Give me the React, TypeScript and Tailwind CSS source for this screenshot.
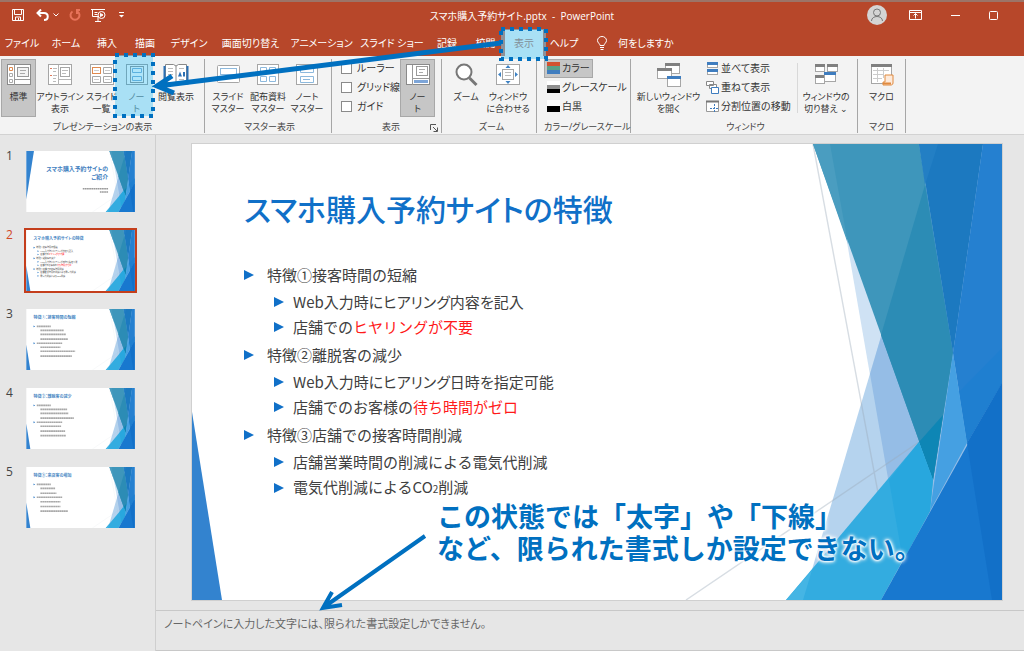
import type { ReactNode } from "react";
import clsx from "clsx";

const BLUE = "#0070c0";

const tabs = [
  { label: "ファイル", width: "w-[44px]" },
  { label: "ホーム", width: "w-[44px]" },
  { label: "挿入", width: "w-[38px]" },
  { label: "描画", width: "w-[38px]" },
  { label: "デザイン", width: "w-[50px]" },
  { label: "画面切り替え", width: "w-[73px]" },
  { label: "アニメーション", width: "w-[69px]" },
  { label: "スライド ショー", width: "w-[72px]" },
  { label: "記録", width: "w-[38px]" },
  { label: "校閲", width: "w-[39px]" },
  { label: "表示", width: "w-[38px]", active: true },
  { label: "ヘルプ", width: "w-[42px]" },
];

const topics = [
  {
    head: "特徴①接客時間の短縮",
    items: [
      { text: "Web入力時にヒアリング内容を記入", tight: true },
      { text: "店舗での", red: "ヒヤリングが不要" },
    ],
  },
  {
    head: "特徴②離脱客の減少",
    items: [
      { text: "Web入力時にヒアリング日時を指定可能", tight: true },
      { text: "店舗でのお客様の", red: "待ち時間がゼロ" },
    ],
  },
  {
    head: "特徴③店舗での接客時間削減",
    items: [{ text: "店舗営業時間の削減による電気代削減" }, { text: "電気代削減によるCO", sub: "2", rest: "削減" }],
  },
];

// [x, y, width] of each body line in the 810 x 456 slide space
const thumbs = [
  { title: "", lines: [] },
  { title: "スマホ購入予約サイトの特徴", lines: [] },
  {
    title: "特徴①：接客時間の短縮",
    lines: [[78, 130, 105], [105, 160, 175], [105, 190, 190], [105, 225, 205], [78, 256, 190], [105, 286, 150], [105, 316, 260], [105, 352, 235]],
  },
  {
    title: "特徴②：離脱客の減少",
    lines: [[78, 130, 105], [105, 160, 200], [105, 190, 210], [105, 225, 250], [78, 256, 190], [105, 286, 155], [105, 322, 185], [105, 356, 190]],
  },
  {
    title: "特徴③：来店客の増加",
    lines: [[78, 130, 105], [105, 160, 110], [105, 196, 120], [78, 226, 190], [105, 260, 150], [105, 295, 150], [105, 330, 205]],
  },
];

function FacetArt({ cover = false }: { cover?: boolean }) {
  return (
    <>
      <rect width="810" height="456" fill="#fff" />
      <path fill="#cfe2f4" d="M638 0H810V456H717Z" />
      <path fill="#b5d3ee" d="M746 0H810V456H611Z" />
      <path fill="#95bde6" d="M746 0 678 230 717 456H810V0Z" />
      <path fill="none" stroke="#9aa9b8" strokeOpacity=".4" strokeWidth="1.4" d="M621 0 706 456M494 456 727 298" />
      <path fill="#3e96bb" d="M621 0H727L761 209 741 336Z" />
      <path fill="#4a9dc0" d="M621 0H638L656 100Z" />
      <path fill="#2c8cb5" d="M733 41 761 209 741 336 689 191Z" />
      <path fill="#0e86b5" d="M751 271 741 336 727 298Z" />
      <path fill="#1c79c0" d="M727 0H791L761 209Z" />
      <path fill="#237fc4" d="M727 0H746L733 41Z" />
      <path fill="#2580d0" d="M791 0H810V239L775 299 761 209Z" />
      <path fill="#1f7fd0" d="M810 204V239L775 299 767 248Z" />
      <path fill="#45a0e2" d="M761 209 775 299 738 367Z" />
      <path fill="#33ace0" d="M727 298 741 336 738 367 689 456H594Z" />
      <path fill="#28a7de" d="M727 298 741 336 738 367 711 417 697 336Z" />
      <path fill="#45b5e4" d="M594 456H611L620 426Z" />
      <path fill="#1878cf" d="M810 239V456H689Z" />
      <path fill="#1270c8" d="M810 239 775 299 800 456H810Z" />
      <path fill="#3383cf" d={cover ? "M0 0H57L0 360Z" : "M0 268 30 456H0Z"} />
    </>
  );
}

function Thumbnail({ index }: { index: number }) {
  const { title, lines } = thumbs[index];
  return (
    <svg viewBox="0 0 810 456" className="block h-full w-full" aria-hidden="true">
      <FacetArt cover={index === 0} />
      {index === 0 && (
        <g fill="#3f80c0" fontSize="44" fontWeight="700" textAnchor="end">
          <text x="611" y="152">スマホ購入予約サイトの</text>
          <text x="611" y="208">ご紹介</text>
          <path d="M422 282H611M550 307H611" stroke="#9a9a9a" strokeWidth="11" strokeDasharray="13 3" />
        </g>
      )}
      {title && (
        <text x="54" y="76" fill="#4a88c4" fontSize="30" fontWeight="700">
          {title}
        </text>
      )}
      {index === 1 &&
        topics.map((topic, i) => (
          <g key={topic.head} fontSize="16" fill="#444">
            <path d={`M54 ${125 + i * 80}v14l12-7z`} fill="#1b6fc2" />
            <text x="75" y={137 + i * 80}>{topic.head}</text>
            {topic.items.map((item, j) => (
              <g key={item.text}>
                <path d={`M84 ${152 + i * 80 + j * 25}v12l10-6z`} fill="#1b6fc2" />
                <text x="105" y={164 + i * 80 + j * 25}>
                  {item.text}
                  <tspan fill="red">{item.red}</tspan>
                  {item.sub}
                  {item.rest}
                </text>
              </g>
            ))}
          </g>
        ))}
      {lines.map(([x, y, w], i) => (
        <g key={i}>
          <path d={`M${x} ${y}h${w}`} stroke="#a8a8a8" strokeWidth="12" strokeDasharray="14 2" />
          {x === 78 && <path d={`M54 ${y - 7}v14l12-7z`} fill="#1b6fc2" />}
        </g>
      ))}
    </svg>
  );
}

/* ---------- ribbon pieces ---------- */

function Group({ label, className, children }: { label: string; className: string; children: ReactNode }) {
  return (
    <section className={clsx("relative flex shrink-0 flex-col justify-between border-r border-[#a6a6a6]", className)}>
      <div className="flex">{children}</div>
      <h2 className="text-center text-[9px] leading-[12px] whitespace-nowrap text-[#444]">{label}</h2>
    </section>
  );
}

function BigButton({ lines, className, pressed, children }: { lines: string[]; className: string; pressed?: boolean; children: ReactNode }) {
  return (
    <button
      type="button"
      className={clsx(
        "flex h-[58px] shrink-0 flex-col items-center border pt-[3px] text-[9px] leading-[12px] whitespace-nowrap text-[#333]",
        pressed ? "border-[#a8a8a8] bg-[#c6c6c6]" : "border-transparent",
        className
      )}
    >
      <svg viewBox="0 0 26 24" className="mb-1 h-[24px] w-[26px] shrink-0" fill="none" aria-hidden="true">
        {children}
      </svg>
      {lines.map((line) => (
        <span key={line}>{line}</span>
      ))}
    </button>
  );
}

function SmallButton({ label, pressed, children }: { label: string; pressed?: boolean; children: ReactNode }) {
  return (
    <button
      type="button"
      className={clsx(
        "flex h-[19px] items-center gap-[2px] border px-[2px] text-[10px] whitespace-nowrap text-[#333]",
        pressed ? "border-[#a8a8a8] bg-[#c6c6c6]" : "border-transparent"
      )}
    >
      <svg viewBox="0 0 13 13" className="h-[13px] w-[13px]" fill="none" aria-hidden="true">
        {children}
      </svg>
      {label}
    </button>
  );
}

function Check({ label }: { label: string }) {
  return (
    <label className="flex h-[19px] items-center gap-[5px] text-[10px] whitespace-nowrap text-[#333]">
      <input type="checkbox" className="h-[11px] w-[11px] appearance-none border border-[#8a8a8a] bg-white" />
      {label}
    </label>
  );
}

function Swatch({ colors }: { colors: string[] }) {
  return (
    <>
      <rect width="13" height="12" fill={colors[0]} />
      <rect y="4" width="13" height="8" fill={colors[1]} />
      <rect y="8" width="13" height="4" fill={colors[2]} />
    </>
  );
}

function MiniWindow({ x, y, w = 12, h = 10, bar = "#808080" }: { x: number; y: number; w?: number; h?: number; bar?: string }) {
  return (
    <>
      <rect x={x + 0.5} y={y + 0.5} width={w} height={h} fill="#fff" stroke="#a6a6a6" />
      <rect x={x} y={y} width={w + 1} height="3" fill={bar} />
    </>
  );
}

function Ribbon() {
  return (
    <div className="flex h-[79px] border-b border-[#d2d2d2] bg-[#f3f3f3] pt-[3px] pb-px">
      <Group label="プレゼンテーションの表示" className="w-[205px] pl-px">
        <BigButton lines={["標準"]} className="w-[35px]" pressed>
          <rect x="1.5" y="1.5" width="23" height="20" fill="#fff" stroke="#8a8a8a" />
          <path d="M8.5 2V22M9 16.5H24" stroke="#999" />
          <path d="M3.500 4.500h3v3h-3z" stroke="#e08a4f" />
          <path d="M3.500 10.500h3v3h-3zM3.500 16.500h3v3h-3z" stroke="#aaa" />
          <rect x="11.5" y="4.500" width="11" height="9" fill="#f3f3f3" stroke="#999" />
          <path d="M14 7.500h6M14 10.500h5" stroke="#aaa" />
        </BigButton>
        <BigButton lines={["アウトライン", "表示"]} className="w-[48px]">
          <rect x="1.5" y="1.5" width="23" height="20" fill="#fff" stroke="#a6a6a6" />
          <path d="M11.5 2V22M12 16.5H24" stroke="#b5b5b5" />
          <path d="M3 5.500h2M3 12.500h2" stroke="#e0785a" />
          <path d="M6 5.500h4M6 8.500h3M6 12.500h4M6 15.500h3M6 18.500h3" stroke="#bbb" />
          <rect x="13.5" y="4.500" width="9" height="9" stroke="#a6a6a6" />
          <path d="M15 7.500h6M15 10.500h4" stroke="#bbb" />
        </BigButton>
        <BigButton lines={["スライド", "一覧"]} className="w-[35px]">
          <rect x="1.5" y="1.5" width="23" height="20" fill="#fff" stroke="#a6a6a6" />
          <rect x="3.500" y="4.500" width="8" height="6" stroke="#e08a4f" />
          <path d="M14.500 4.500h8v6h-8zM3.500 13.500h8v6h-8zM14.500 13.500h8v6h-8z" stroke="#a6a6a6" />
          <path d="M5 7.500h5M16 7.500h5M5 16.500h5M16 16.500h5" stroke="#ccc" />
        </BigButton>
        <BigButton lines={["ノー", "ト"]} className="w-[35px]">
          <rect x="2.500" y="1.500" width="21" height="20" fill="#fff" stroke="#777" />
          <rect x="6.500" y="3.500" width="13" height="16" stroke="#666" />
          <path d="M8.500 5.500h9v4h-9zM8.500 13.500h9v4h-9z" stroke="#4a8cc4" />
        </BigButton>
        <BigButton lines={["閲覧表示"]} className="w-[44px]">
          <path d="M2.500 1.500h8l2.500 1.500 2.500-1.500h8v18h-8L13 21l-2.500-1.500h-8z" fill="#fff" stroke="#888" />
          <path d="M13 3v18" stroke="#888" />
          <path d="M1.500 3v18.500M24.500 3v18.500" stroke="#2b70b5" strokeWidth="2" />
          <path d="M5 5.500h5M5 8.500h5M5 11.500h5M5 14.500h5M16 5.500h5M16 16.500h5" stroke="#bbb" />
          <path d="M15 13.500l2-5 2 5zM20 9h2v4.500h-2z" fill="#2b70b5" />
        </BigButton>
      </Group>

      <Group label="マスター表示" className="w-[127px] pl-[3px]">
        <BigButton lines={["スライド", "マスター"]} className="w-[40px]">
          <rect x="2.500" y="2.500" width="22" height="17" rx="1" fill="#fff" stroke="#a6a6a6" />
          <rect x="5.500" y="5.500" width="16" height="6" stroke="#8db9dd" />
          <path d="M6 15.500h15" stroke="#c5d9ea" />
        </BigButton>
        <BigButton lines={["配布資料", "マスター"]} className="w-[40px]">
          <rect x="2.500" y="1.500" width="21" height="20" fill="#fff" stroke="#a6a6a6" />
          <path d="M5.500 4.500h6v5h-6zM14.500 4.500h6v5h-6zM5.500 13.500h6v5h-6zM14.500 13.500h6v5h-6z" stroke="#8db9dd" />
        </BigButton>
        <BigButton lines={["ノート", "マスター"]} className="w-[38px]">
          <rect x="2.500" y="1.500" width="21" height="20" fill="#fff" stroke="#a6a6a6" />
          <path d="M6.500 4.500h13v5h-13zM6.500 13.500h13v6h-13z" stroke="#8db9dd" />
          <path d="M9 16.500h7" stroke="#8db9dd" />
        </BigButton>
      </Group>

      <Group label="表示" className="w-[110px] pl-[9px]">
        <div className="flex w-[59px] flex-col">
          <Check label="ルーラー" />
          <Check label="グリッド線" />
          <Check label="ガイド" />
        </div>
        <BigButton lines={["ノー", "ト"]} className="w-[35px]" pressed>
          <rect x="1.500" y="1.500" width="23" height="20" fill="#fff" stroke="#8a8a8a" />
          <path d="M7.500 2V22M8 15.500H24" stroke="#999" />
          <rect x="11.500" y="3.500" width="11" height="9" stroke="#999" />
          <path d="M14 6.500h6M14 9.500h4" stroke="#aaa" />
          <path d="M9 18.500h14" stroke="#7da5d8" strokeWidth="3" />
        </BigButton>
        <svg viewBox="0 0 8 8" className="absolute right-[3px] bottom-[1px] h-2 w-2" fill="none" stroke="#555" aria-hidden="true">
          <path d="M.5 6V.5H6M3 3l4 4M7.500 3.500v4h-4" />
        </svg>
      </Group>

      <Group label="ズーム" className="w-[95px] pl-[5px]">
        <BigButton lines={["ズーム"]} className="w-[38px]">
          <circle cx="11" cy="9" r="7.500" fill="#fff" stroke="#777" strokeWidth="2" />
          <path d="m16.500 15 7 7" stroke="#777" strokeWidth="3" />
        </BigButton>
        <BigButton lines={["ウィンドウ", "に合わせる"]} className="w-[46px]">
          <rect x="1.500" y="1.500" width="23" height="20" fill="#fff" stroke="#a6a6a6" />
          <rect x="7.500" y="6.500" width="11" height="10" stroke="#a6a6a6" />
          <path d="M10 9.500h6M10 12.500h6" stroke="#bbb" />
          <path d="m10.500 5 2.500-3 2.500 3zM10.500 18l2.500 3 2.500-3zM6 9l-3 2.500L6 14zM20 9l3 2.500L20 14z" fill="#3e82c4" />
        </BigButton>
      </Group>

      <Group label="カラー/グレースケール" className="w-[94px] pl-[7px]">
        <div className="flex flex-col items-start">
          <SmallButton label="カラー" pressed>
            <Swatch colors={["#d35230", "#5aa088", "#3f7dbf"]} />
          </SmallButton>
          <SmallButton label="グレースケール">
            <Swatch colors={["#fff", "#8f8f8f", "#000"]} />
          </SmallButton>
          <SmallButton label="白黒">
            <rect width="13" height="12" fill="#fff" />
            <rect y="6" width="13" height="6" fill="#000" />
          </SmallButton>
        </div>
      </Group>

      <Group label="ウィンドウ" className="w-[227px] pl-[3px]">
        <BigButton lines={["新しいウィンドウ", "を開く"]} className="w-[69px]">
          <MiniWindow x={9} y={0} w={14} />
          <MiniWindow x={1} y={5} w={14} />
          <MiniWindow x={11} y={13} w={13} bar="#3f7dbf" />
        </BigButton>
        <div className="flex w-[94px] flex-col items-start">
          <SmallButton label="並べて表示">
            <MiniWindow x={1} y={0} w={10} h={5} bar="#3f7dbf" />
            <MiniWindow x={1} y={7} w={10} h={5} bar="#3f7dbf" />
          </SmallButton>
          <SmallButton label="重ねて表示">
            <path d="M.5.5h7v4h-7zM3.500 3.500h7v4h-7z" fill="#fff" stroke="#888" />
            <path d="M5.500 6.500h7v6h-7z" fill="#fff" stroke="#3f7dbf" />
          </SmallButton>
          <SmallButton label="分割位置の移動">
            <path d="M.5 1.500h12v10H.5z" fill="#fff" stroke="#999" />
            <path d="M0 1.500h13" stroke="#777" strokeWidth="2" />
            <path d="M8.500 4v8M4 8.500h8" stroke="#3f7dbf" strokeDasharray="2 1" />
          </SmallButton>
        </div>
        <div className="my-1 w-px bg-[#d8d8d8]" />
        <BigButton lines={["ウィンドウの", "切り替え ⌄"]} className="w-[56px]">
          <MiniWindow x={2} y={1} w={9} h={7} />
          <MiniWindow x={14} y={1} w={10} h={7} />
          <MiniWindow x={2} y={12} w={9} h={8} />
          <MiniWindow x={11} y={9} w={11} h={9} bar="#3f7dbf" />
        </BigButton>
      </Group>

      <Group label="マクロ" className="w-[48px]">
        <BigButton lines={["マクロ"]} className="w-[47px]">
          <MiniWindow x={2} y={1} w={20} h={19} />
          <path d="M4 7.500h16M4 11.500h11M4 15.500h9M8.500 5v14M14.500 5v10" stroke="#ccc" />
          <path d="M16 12h8v8c0 2-2 2-2 2h-8v-3h2z" fill="#fdeadb" stroke="#e08a3f" />
          <path d="M14 20.500h8" stroke="#e08a3f" strokeWidth="2" />
        </BigButton>
      </Group>
    </div>
  );
}

function TitleBar() {
  return (
    <div className="relative flex h-[30px] items-center justify-center border-t-2 border-[#9c7468] text-[10px] text-white">
      <div className="absolute inset-y-0 left-3 flex items-center pb-[2px]">
        <button type="button" aria-label="上書き保存" className="mr-3">
          <svg viewBox="0 0 12 12" className="h-3 w-3" fill="none" stroke="#fff">
            <path d="M.5.5h11v11H.5zM2.500 1v4.500h7V1M3.500 11V8h5v3M6.500 9v2" />
          </svg>
        </button>
        <button type="button" aria-label="元に戻す" className="mr-1">
          <svg viewBox="0 0 13 12" className="h-3 w-[13px]" fill="none" stroke="#fff" strokeWidth="2">
            <path d="M5 .500 1.500 4 5 7.500M2 4h6c5 0 5 7 0 7" />
          </svg>
        </button>
        <svg viewBox="0 0 6 4" className="mr-[10px] h-1 w-[6px]" fill="none" stroke="#fff" aria-hidden="true">
          <path d="m.5.5 2.500 2.500L5.500.5" />
        </svg>
        <button type="button" aria-label="やり直し" className="mr-[10px]">
          <svg viewBox="0 0 12 12" className="h-3 w-3" fill="none" stroke="#e8735a" strokeWidth="2">
            <path d="M3.500 2.500a4.500 4.500 0 1 0 5 0M7 1h4M8 0v5" />
          </svg>
        </button>
        <button type="button" aria-label="最初から開始" className="mr-[13px]">
          <svg viewBox="0 0 15 13" className="h-[13px] w-[15px]" fill="none" stroke="#fff">
            <path d="M0 .5h14M1.500 1v6.500H8M7 8v4M4 12.500h6M3.500 3.500h3M3.500 5.500h3" />
            <circle cx="10.500" cy="6" r="3.500" />
            <path d="m9.500 4.500 2.500 1.500-2.500 1.500z" fill="#fff" />
          </svg>
        </button>
        <svg viewBox="0 0 5 6" className="h-[6px] w-[5px]" fill="#fff" aria-hidden="true">
          <path d="M0 0h5v1H0zM0 3h5L2.500 5.500z" />
        </svg>
      </div>
      <h1 className="ml-5 whitespace-pre">スマホ購入予約サイト.pptx  -  PowerPoint</h1>
      <div className="absolute inset-y-0 right-[26px] flex items-center gap-[29px] pb-[2px]">
        <button type="button" aria-label="アカウント" className="-mr-[7px]">
          <svg viewBox="0 0 20 20" className="h-5 w-5" fill="none" stroke="#777">
            <circle cx="10" cy="10" r="10" fill="#d4d4d4" stroke="none" />
            <circle cx="10" cy="7.500" r="3.500" />
            <path d="M4.500 16c0-6 11-6 11 0" />
          </svg>
        </button>
        <button type="button" aria-label="リボンの表示オプション">
          <svg viewBox="0 0 13 10" className="h-[10px] w-[13px]" fill="none" stroke="#fff">
            <path d="M.5.5h12v9H.5zM1 2.500h11M6.500 8.500v-5M4.500 5.500l2-2 2 2" />
          </svg>
        </button>
        <button type="button" aria-label="最小化">
          <svg viewBox="0 0 9 9" className="h-[9px] w-[9px]" stroke="#fff">
            <path d="M0 4.500h9" />
          </svg>
        </button>
        <button type="button" aria-label="最大化">
          <svg viewBox="0 0 9 9" className="h-[9px] w-[9px]" fill="none" stroke="#fff">
            <rect x=".5" y=".5" width="8" height="8" rx="1" />
          </svg>
        </button>
      </div>
    </div>
  );
}

function Bullet() {
  return (
    <svg viewBox="0 0 10 10" className="h-[10px] w-[10px] shrink-0" fill="#1070c8" aria-hidden="true">
      <path d="M0 0 10 5 0 10Z" />
    </svg>
  );
}

function Slide() {
  return (
    <article className="relative aspect-[810/456] w-full font-['Noto_Sans_CJK_JP',sans-serif] outline outline-[#d0d0d0]">
      <svg viewBox="0 0 810 456" className="absolute inset-0 h-full w-full" aria-hidden="true">
        <FacetArt />
      </svg>
      <div className="relative pt-10 pl-[52px] text-[15px] text-[#404040]">
        <h2 className="text-[30px] leading-[48px] font-medium text-[#1070c8]">スマホ購入予約サイトの特徴</h2>
        <ul className="mt-[29px] flex flex-col gap-[2px]">
          {topics.map((topic) => (
            <li key={topic.head}>
              <div className="flex items-center gap-[13px] leading-[28px] [font-feature-settings:normal]">
                <Bullet />
                {topic.head}
              </div>
              <ul className="pl-[30px]">
                {topic.items.map((item) => (
                  <li key={item.text} className="flex items-center gap-[9px] leading-[25px]">
                    <Bullet />
                    <span className={item.tight ? undefined : "[font-feature-settings:normal]"}>
                      {item.text}
                      {item.red && <span className="text-[#ff1a1a]">{item.red}</span>}
                      {item.sub && <small className="text-[10px]">{item.sub}</small>}
                      {item.rest}
                    </span>
                  </li>
                ))}
              </ul>
            </li>
          ))}
        </ul>
      </div>
    </article>
  );
}

export default function App() {
  return (
    <div className="flex min-h-screen flex-col overflow-hidden bg-[#e6e6e6] font-['Open_Sans','Noto_Sans_CJK_JP',sans-serif] [font-feature-settings:'palt']">
      <header className="relative">
        <div className="bg-[#b7472a]">
          <TitleBar />
          <nav className="flex h-[26px] text-[10px] text-white">
            {tabs.map((tab) => (
              <button
                key={tab.label}
                type="button"
                className={clsx(
                  "flex shrink-0 items-center justify-center whitespace-nowrap",
                  tab.width,
                  tab.active && "bg-[#f3f3f3] text-[#a03a20]"
                )}
              >
                {tab.label}
              </button>
            ))}
            <button type="button" className="ml-3 flex items-center gap-[11px] whitespace-nowrap">
              <svg viewBox="0 0 10 14" className="h-[14px] w-[10px]" fill="none" stroke="#fff" aria-hidden="true">
                <path d="M3 9.500C3 7.500.5 7 .5 4.500a4.500 4 0 0 1 9 0C9.500 7 7 7.500 7 9.500zM3 11.500h4M3.500 13.500h3" />
              </svg>
              何をしますか
            </button>
          </nav>
        </div>
        <Ribbon />
        {/* annotations over the tabs and the ribbon */}
        <svg viewBox="0 0 600 135" className="pointer-events-none absolute top-0 left-0 h-[135px] w-[600px]" fill="none" aria-hidden="true">
          <g fill="#6cd0f6" fillOpacity=".55" stroke={BLUE} strokeWidth="4" strokeDasharray="4 5">
            <rect x="501" y="29" width="45" height="30" />
            <rect x="115" y="55" width="38" height="61" />
          </g>
          <path d="M501 43 158 86M172 76 157 86 174 93" stroke={BLUE} strokeWidth="5" />
        </svg>
      </header>

      <div className="flex flex-1">
        <aside className="w-[156px] shrink-0 border-r border-[#cfcfcf] pt-[14px]">
          <ol className="flex flex-col gap-[14px]">
            {thumbs.map((_, i) => (
              <li key={i} className="flex pl-[6px]">
                <span className={clsx("w-[18px] text-[12px] leading-[14px]", i === 1 ? "text-[#d24726]" : "text-[#444]")}>
                  {i + 1}
                </span>
                <button
                  type="button"
                  aria-label={`スライド ${i + 1}`}
                  className={clsx("h-[65px] w-[113px] border-2", i === 1 ? "border-[#c43e1c]" : "border-transparent")}
                >
                  <Thumbnail index={i} />
                </button>
              </li>
            ))}
          </ol>
        </aside>

        <main className="relative flex min-w-0 flex-1 flex-col">
          <div className="pt-[9px] pr-[22px] pb-[10px] pl-9">
            <Slide />
          </div>
          <div className="flex-1 border-t border-b border-[#c8c8c8] px-2 pt-1">
            <p className="text-[11px] leading-[18px] text-[#666]">ノートペインに入力した文字には、限られた書式設定しかできません。</p>
          </div>
          <p className="absolute top-[365px] left-[281px] text-[27px] leading-[32px] font-bold whitespace-nowrap text-[#0070c0] [font-family:'Noto_Sans_CJK_JP',sans-serif] [font-feature-settings:normal] [text-shadow:0_0_2px_#fff,0_0_2px_#fff,0_0_3px_#fff,0_0_4px_#fff,0_0_5px_#fff]">
            この状態では「太字」や「下線」
            <br />
            など、限られた書式しか設定できない。
          </p>
          <svg viewBox="0 0 110 80" className="pointer-events-none absolute top-[398px] left-[162px] h-[80px] w-[110px]" fill="none" stroke={BLUE} strokeWidth="4" aria-hidden="true">
            <path d="M107 3 6 74M14 59 5 75 24 72" />
          </svg>
        </main>
      </div>
    </div>
  );
}
